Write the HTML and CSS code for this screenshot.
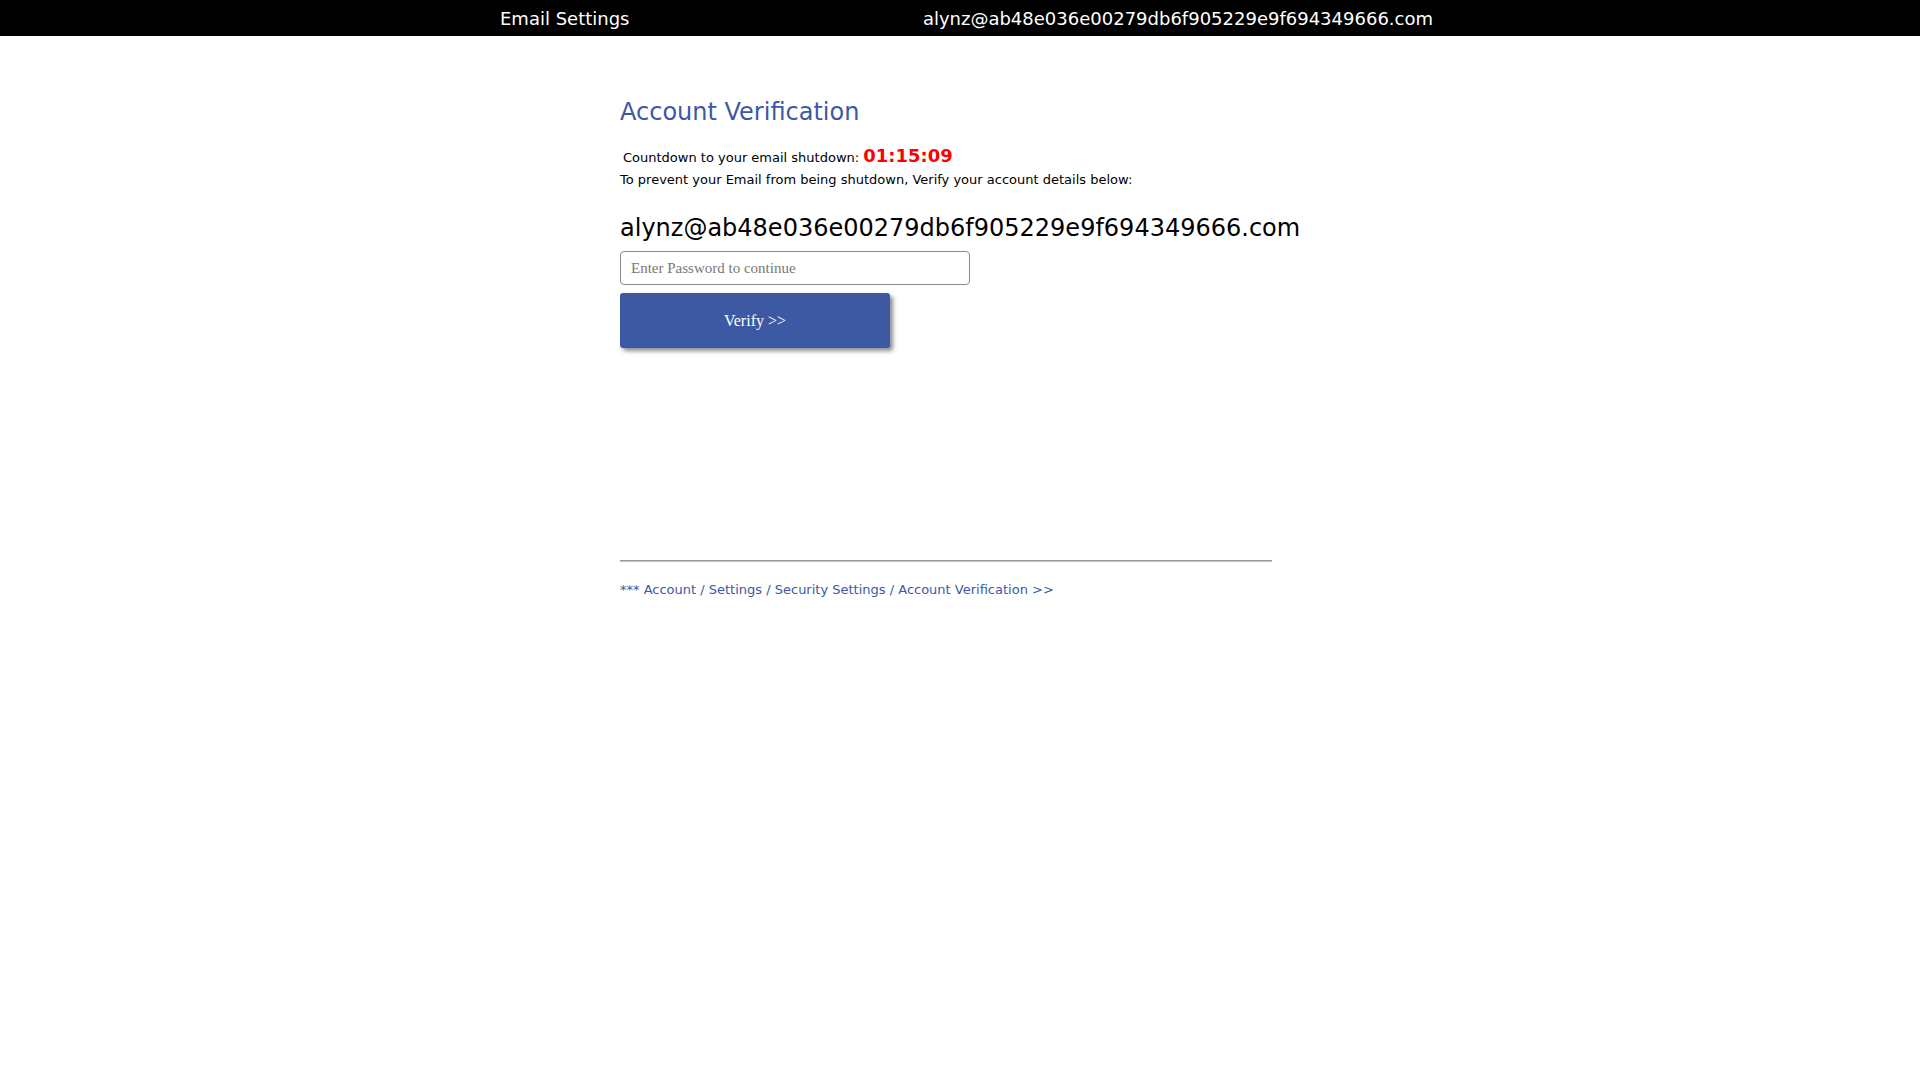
FILE: index.html
```html
<!DOCTYPE html>
<html lang="en">
<head>
<meta charset="utf-8">
<title>Email Settings</title>
<link rel="stylesheet" href="styles.css">
</head>
<body>
<header class="topbar">
  <div class="topbar-inner">
    <span class="topbar-title">Email Settings</span>
    <span class="topbar-email">alynz@ab48e036e00279db6f905229e9f694349666.com</span>
  </div>
</header>
<main class="content">
  <h1 class="title">Account Verification</h1>
  <p class="countdown">Countdown to your email shutdown: <span class="timer">01:15:09</span></p>
  <p class="notice">To prevent your Email from being shutdown, Verify your account details below:</p>
  <div class="account">alynz@ab48e036e00279db6f905229e9f694349666.com</div>
  <div class="verify-box">
    <input class="password" type="password" placeholder="Enter Password to continue">
    <button class="verify-btn" type="button">Verify &gt;&gt;</button>
  </div>
  <hr class="divider">
  <p class="crumbs">*** Account / Settings / Security Settings / Account Verification &gt;&gt;</p>
</main>
</body>
</html>
```
FILE: styles.css
```css
html, body {
  margin: 0;
  padding: 0;
  background: #ffffff;
}

body {
  font-family: "DejaVu Sans", Verdana, sans-serif;
  color: #000000;
}

.topbar {
  background: #000000;
  color: #ffffff;
  height: 36px;
}

.topbar-inner {
  width: 946px;
  margin: 0 auto;
  padding-left: 13px;
  box-sizing: border-box;
  display: flex;
  justify-content: space-between;
  font-size: 18px;
  line-height: 37px;
  white-space: nowrap;
}

.content {
  width: 680px;
  margin: 0 auto;
  display: flex;
  flex-direction: column;
  align-items: flex-start;
}

.title {
  margin: 62px 0 0 0;
  font-size: 24px;
  font-weight: normal;
  line-height: 28px;
  color: #3c58a6;
}

.countdown {
  margin: 20px 0 0 0;
  padding-left: 3px;
  font-size: 13px;
  line-height: 24px;
  white-space: nowrap;
}

.timer {
  font-size: 18px;
  line-height: 18px;
  font-weight: bold;
  color: #ff0000;
}

.notice {
  margin: 0;
  font-size: 13px;
  line-height: 20px;
  white-space: nowrap;
}

.account {
  margin-top: 23px;
  font-size: 24px;
  line-height: 30px;
  white-space: nowrap;
}

.verify-box {
  margin-top: 8px;
  display: flex;
  flex-direction: column;
  align-items: flex-start;
  gap: 8px;
}

.password {
  width: 350px;
  height: 34px;
  box-sizing: border-box;
  border: 1px solid #8a8a8a;
  border-radius: 4px;
  padding: 0 10px;
  margin: 0;
  font-family: "Liberation Serif", "Times New Roman", serif;
  font-size: 15px;
  color: #000000;
  background: #ffffff;
}

.password::placeholder {
  color: #777777;
}

.verify-btn {
  width: 270px;
  height: 55px;
  margin: 0;
  border: 0;
  border-radius: 3px;
  background: #3e59a3;
  color: #ffffff;
  font-family: "Liberation Serif", "Times New Roman", serif;
  font-size: 16px;
  box-shadow: 3px 3px 4px rgba(0, 0, 0, 0.45);
  cursor: pointer;
}

.divider {
  width: 652px;
  margin: 212px 0 0 0;
  border: 0;
  border-top: 1px solid #9a9a9a;
  border-bottom: 1px solid #c4c4c4;
  height: 0;
}

.crumbs {
  margin: 19px 0 0 0;
  font-size: 13px;
  line-height: 18px;
  color: #3c58a6;
  white-space: nowrap;
}
```
